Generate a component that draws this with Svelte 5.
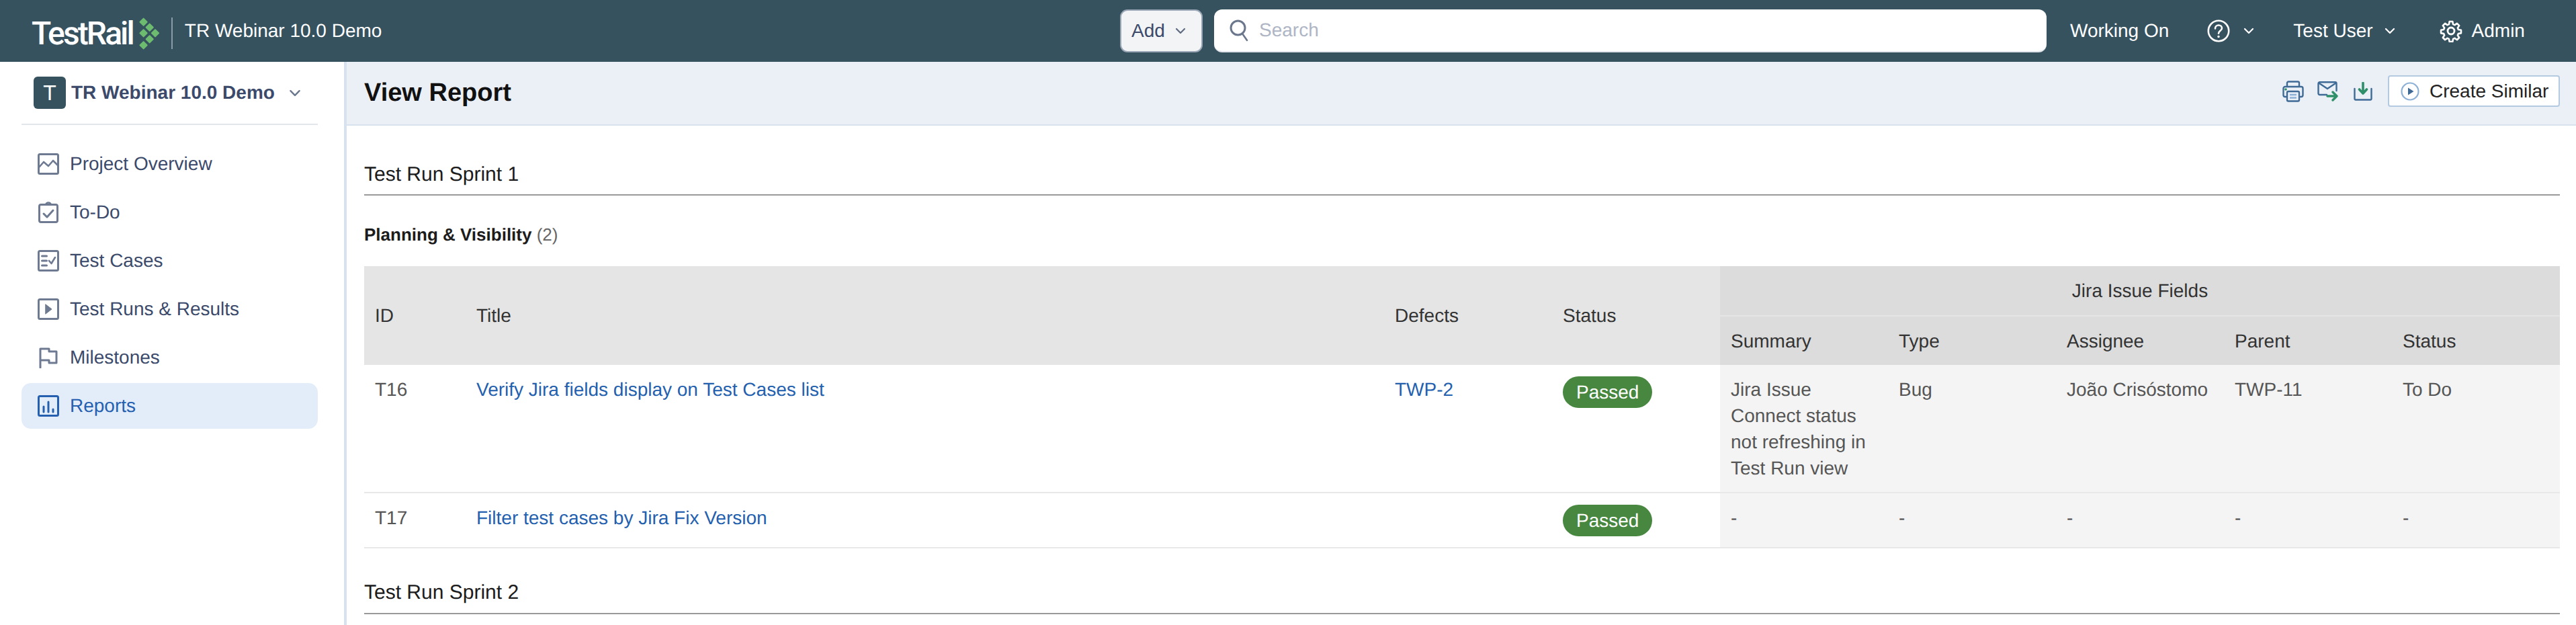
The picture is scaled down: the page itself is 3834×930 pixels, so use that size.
<script>
  const nav = [
    { key: 'overview', label: 'Project Overview' },
    { key: 'todo', label: 'To-Do' },
    { key: 'cases', label: 'Test Cases' },
    { key: 'runs', label: 'Test Runs & Results' },
    { key: 'milestones', label: 'Milestones' },
    { key: 'reports', label: 'Reports', active: true }
  ];

  const diamonds = [
    [4.6, 6.7], [13.7, 14.7], [4.6, 23.3], [22, 23.3], [13.7, 32.3], [4.6, 41.3]
  ];

  const rows = [
    {
      id: 'T16',
      title: 'Verify Jira fields display on Test Cases list',
      defect: 'TWP-2',
      fields: ['Jira Issue Connect status not refreshing in Test Run view', 'Bug', 'João Crisóstomo', 'TWP-11', 'To Do']
    },
    {
      id: 'T17',
      title: 'Filter test cases by Jira Fix Version',
      defect: '',
      fields: ['-', '-', '-', '-', '-']
    }
  ];

  const jira_cols = ['Summary', 'Type', 'Assignee', 'Parent', 'Status'];
</script>

{#snippet chevron(cls)}
  <svg class={cls} viewBox="0 0 16 10" fill="none" stroke="currentColor" stroke-width="2.2" stroke-linecap="round" stroke-linejoin="round">
    <polyline points="2,2 8,8 14,2" />
  </svg>
{/snippet}

<div class="shell">
  <header class="topbar">
    <div class="brand">
      <span class="wordmark">TestRail</span>
      <svg class="mark" viewBox="0 0 28 48" fill="#6cbb6f">
        {#each diamonds as [x, y]}
          <rect x={x - 4.6} y={y - 4.6} width="9.2" height="9.2" rx="1" transform="rotate(45 {x} {y})" />
        {/each}
      </svg>
      <span class="sep"></span>
      <span class="project">TR Webinar 10.0 Demo</span>
    </div>

    <button class="add">Add {@render chevron('chev-add')}</button>

    <div class="search">
      <svg class="search-icon" viewBox="0 0 28 34" fill="none" stroke="#6b778c" stroke-width="3" stroke-linecap="round">
        <circle cx="12.5" cy="13.5" r="10.5" />
        <line x1="19" y1="22" x2="26" y2="32" stroke-width="2.6" />
      </svg>
      <span>Search</span>
    </div>

    <div class="top-links">
      <span>Working On</span>
      <svg class="help" viewBox="0 0 34 34" fill="none" stroke="#fff" stroke-width="2.6">
        <circle cx="17" cy="17" r="15.2" />
        <path d="M12 13.5c0-3 2.2-5 5-5s5 2 5 4.6c0 3.6-5 3.8-5 7.6" stroke-linecap="round" />
        <circle cx="17" cy="25.5" r="1.7" fill="#fff" stroke="none" />
      </svg>
      {@render chevron('chev-help')}
      <span class="user">Test User</span>
      {@render chevron('chev-user')}
      <svg class="gear" viewBox="0 0 34 34" fill="none" stroke="#fff" stroke-width="2.8" stroke-linejoin="round">
        <path d="M14.5 2h5l.8 4.4 2.6 1.1 3.7-2.5 3.5 3.5-2.5 3.7 1.1 2.6 4.4.8v5l-4.4.8-1.1 2.6 2.5 3.7-3.5 3.5-3.7-2.5-2.6 1.1-.8 4.4h-5l-.8-4.4-2.6-1.1-3.7 2.5-3.5-3.5 2.5-3.7-1.1-2.6-4.4-.8v-5l4.4-.8 1.1-2.6-2.5-3.7 3.5-3.5 3.7 2.5 2.6-1.1z" transform="translate(1.2 1.2) scale(.93)" />
        <circle cx="17" cy="17" r="5" />
      </svg>
      <span class="admin">Admin</span>
    </div>
  </header>

  <div class="body">
    <aside class="sidebar">
      <div class="project-row">
        <span class="avatar">T</span>
        <strong>TR Webinar 10.0 Demo</strong>
        {@render chevron('chev-project')}
      </div>
      <nav>
        {#each nav as item (item.key)}
          <a href="#top" class="nav-item" class:active={item.active}>
            <svg class="nav-icon" viewBox="0 0 32 32" fill="none" stroke="currentColor" stroke-width="3" stroke-linejoin="round" stroke-linecap="round">
              {#if item.key === 'overview'}
                <rect x="1.5" y="1.5" width="29" height="29" rx="2" />
                <polyline points="2,21 9,13 16,19 23,11 30,18" stroke-width="2.6" />
              {:else if item.key === 'todo'}
                <rect x="2.5" y="4.5" width="27" height="26" rx="2.5" />
                <path d="M12 4.5a4 3 0 0 1 8 0" stroke-width="2.4" />
                <polyline points="9,18 14,23 23,13" />
              {:else if item.key === 'cases'}
                <rect x="1.5" y="1.5" width="29" height="29" rx="2" />
                <path d="M6.5 9h7M6.5 16h7M6.5 23h7" />
                <polyline points="17,16 20.5,20 26,11" stroke-width="2.6" />
              {:else if item.key === 'runs'}
                <rect x="1.5" y="1.5" width="29" height="29" rx="2" />
                <polygon points="12,9 21,16 12,23" fill="currentColor" stroke-width="1" />
              {:else if item.key === 'milestones'}
                <path d="M4 31V3h13v4h11v17H17v-4H4" />
              {:else}
                <rect x="1.5" y="1.5" width="29" height="29" rx="2" />
                <path d="M9 17v8M16 10v15M23 21v4" />
              {/if}
            </svg>
            <span>{item.label}</span>
          </a>
        {/each}
      </nav>
    </aside>

    <main class="main">
      <div class="title-bar">
        <h1>View Report</h1>
        <div class="actions">
          <svg class="print" viewBox="0 0 32 32" fill="none" stroke="#3f6a96" stroke-width="2.4" stroke-linejoin="round">
            <path d="M7 9V3.5a2 2 0 0 1 2-2h14a2 2 0 0 1 2 2V9" />
            <path d="M7 24H4a2.5 2.5 0 0 1-2.5-2.5V11.500a2.500 2.500 0 0 1 2.500-2.500h24a2.500 2.500 0 0 1 2.500 2.500v10a2.500 2.500 0 0 1-2.500 2.500h-3" />
            <rect x="7" y="16" width="18" height="14.500" rx="2" fill="#ebf0f7" />
            <path d="M11 21h10M11 25.500h10" stroke="#8db1d6" />
            <circle cx="5" cy="13" r="1.800" fill="#2f8f68" stroke="none" />
          </svg>
          <svg class="mail" viewBox="0 0 32 30" fill="none" stroke="#3f6a96" stroke-width="2.4" stroke-linecap="round" stroke-linejoin="round">
            <path d="M14 20H3.500a2 2 0 0 1-2-2V3.200a2 2 0 0 1 2-2h23a2 2 0 0 1 2 2V14" />
            <polyline points="3,3 15,11 27,3" />
            <path d="M15 22h14M23 16l6 6-6 6" stroke="#2f8f68" stroke-width="3.400" />
          </svg>
          <svg class="download" viewBox="0 0 28 28" fill="none" stroke="#3f6a96" stroke-width="2.400" stroke-linejoin="round" stroke-linecap="round">
            <path d="M1.500 10v15a1.500 1.500 0 0 0 1.500 1.500h22a1.500 1.500 0 0 0 1.500-1.500V10" />
            <path d="M14 1.500V15M8.500 11L14 17l5.500-6" stroke="#2f8f68" stroke-width="3.600" />
          </svg>
          <button class="similar">
            <svg viewBox="0 0 28 28">
              <circle cx="14" cy="14" r="12.500" fill="none" stroke="#8db1d6" stroke-width="2.200" />
              <polygon points="11,8.500 19.500,14 11,19.500" fill="#3f6a96" />
            </svg>
            Create Similar
          </button>
        </div>
      </div>

      <div class="content">
        <h2>Test Run Sprint 1</h2>
        <h3>Planning &amp; Visibility <small>(2)</small></h3>

        <table>
          <colgroup>
            <col class="c-id" />
            <col class="c-title" />
            <col class="c-std" />
            <col class="c-std" />
            {#each jira_cols as col (col)}
              <col class="c-std" />
            {/each}
          </colgroup>
          <thead>
            <tr class="group-row">
              <th rowspan="2">ID</th>
              <th rowspan="2">Title</th>
              <th rowspan="2">Defects</th>
              <th rowspan="2">Status</th>
              <th colspan="5" class="jira group">Jira Issue Fields</th>
            </tr>
            <tr class="cols-row">
              {#each jira_cols as col (col)}
                <th class="jira">{col}</th>
              {/each}
            </tr>
          </thead>
          <tbody>
            {#each rows as row (row.id)}
              <tr>
                <td>{row.id}</td>
                <td><a href="#top">{row.title}</a></td>
                <td><a href="#top">{row.defect}</a></td>
                <td><span class="pill">Passed</span></td>
                {#each row.fields as value}
                  <td class="jira-cell">{value}</td>
                {/each}
              </tr>
            {/each}
          </tbody>
        </table>

        <h2 class="next">Test Run Sprint 2</h2>
      </div>
    </main>
  </div>
</div>

<style>
  :global(body) {
    margin: 0;
    background: #fff;
    font-family: "Liberation Sans", Arial, sans-serif;
    text-rendering: geometricPrecision;
  }

  .shell {
    height: 930px;
    overflow: hidden;
    display: flex;
    flex-direction: column;
    font-size: 28px;
  }

  /* top bar */
  .topbar {
    flex: none;
    height: 92px;
    background: #36525f;
    color: #fff;
    display: flex;
    align-items: center;
  }

  .brand {
    width: 1667px;
    box-sizing: border-box;
    padding-left: 47px;
    display: flex;
    align-items: center;
  }

  .wordmark {
    font-family: Roboto, sans-serif;
    font-weight: 500;
    font-size: 48px;
    letter-spacing: -2.9px;
    line-height: 48px;
    margin-top: 8px;
  }

  .mark {
    width: 28px;
    height: 48px;
    margin: 8px 0 0 11px;
    overflow: visible;
  }

  .sep {
    width: 2px;
    height: 47px;
    background: #8b9ca6;
    margin: 7px 18px 0 18px;
  }

  .project {
    font-size: 28px;
  }

  .add {
    width: 123px;
    height: 64px;
    box-sizing: border-box;
    border: 2px solid #9aa6b5;
    border-radius: 11px;
    background: #f3f4f6;
    color: #3b4a6b;
    font: inherit;
    padding: 0 0 0 15px;
    display: flex;
    align-items: center;
    gap: 15px;
  }

  .chev-add {
    width: 16px;
    height: 10px;
    color: #5f6b80;
  }

  .search {
    width: 1239px;
    height: 64px;
    margin-left: 17px;
    box-sizing: border-box;
    background: #fff;
    border-radius: 12px;
    border-bottom: 2px solid #e1e4ea;
    padding-left: 23px;
    display: flex;
    align-items: center;
    gap: 16px;
    color: #aeb5c4;
  }

  .search-icon {
    width: 28px;
    height: 34px;
  }

  .top-links {
    margin-left: 35px;
    display: flex;
    align-items: center;
  }

  .help {
    width: 34px;
    height: 34px;
    margin-left: 57px;
  }

  .chev-help,
  .chev-user {
    width: 16px;
    height: 10px;
    margin-left: 20px;
  }

  .user {
    margin-left: 58px;
  }

  .chev-user {
    margin-left: 17px;
  }

  .gear {
    width: 34px;
    height: 34px;
    margin-left: 66px;
  }

  .admin {
    margin-left: 14px;
  }

  /* sidebar */
  .body {
    flex: 1;
    display: flex;
    min-height: 0;
  }

  .sidebar {
    flex: none;
    width: 516px;
    box-sizing: border-box;
    border-right: 4px solid #d8e1ee;
    padding: 0 39px 0 32px;
  }

  .project-row {
    height: 92px;
    border-bottom: 2px solid #e2e5ea;
    display: flex;
    align-items: center;
    padding-left: 18px;
    color: #3b4a6b;
  }

  .avatar {
    width: 48px;
    height: 48px;
    border-radius: 6px;
    background: #36525f;
    color: #fff;
    font-size: 32px;
    display: flex;
    align-items: center;
    justify-content: center;
    margin-right: 8px;
  }

  .project-row strong {
    font-size: 28px;
  }

  .chev-project {
    width: 18px;
    height: 11px;
    margin-left: 21px;
    color: #6b778c;
  }

  nav {
    margin-top: 24px;
    display: flex;
    flex-direction: column;
    gap: 4px;
  }

  .nav-item {
    height: 68px;
    border-radius: 14px;
    padding-left: 24px;
    display: flex;
    align-items: center;
    gap: 16px;
    color: #6e7a91;
    text-decoration: none;
  }

  .nav-item span {
    color: #3b4a6b;
  }

  .nav-item.active {
    background: #e3edfa;
    color: #2560b0;
  }

  .nav-item.active span {
    color: #2560b0;
  }

  .nav-icon {
    width: 32px;
    height: 32px;
    flex: none;
  }

  /* main */
  .main {
    flex: 1;
    min-width: 0;
  }

  .title-bar {
    height: 95px;
    box-sizing: border-box;
    background: #ebf0f7;
    border-bottom: 2px solid #d8e1ee;
    padding: 0 24px 0 26px;
    display: flex;
    align-items: center;
    justify-content: space-between;
  }

  h1 {
    margin: 0;
    font-size: 38px;
    color: #111;
  }

  .actions {
    display: flex;
    align-items: center;
    margin-bottom: 6px;
  }

  .print {
    width: 32px;
    height: 32px;
  }

  .mail {
    width: 32px;
    height: 30px;
    margin-left: 20px;
  }

  .download {
    width: 28px;
    height: 28px;
    margin-left: 22px;
  }

  .similar {
    width: 256px;
    height: 47px;
    box-sizing: border-box;
    margin-left: 23px;
    border: 2px solid #b3cae0;
    border-radius: 4px;
    background: #fff;
    color: #222;
    font: inherit;
    padding: 0 0 0 17px;
    display: flex;
    align-items: center;
    gap: 15px;
  }

  .similar svg {
    width: 28px;
    height: 28px;
  }

  .content {
    padding: 0 24px 0 26px;
  }

  h2 {
    margin: 55px 0 0;
    padding-bottom: 11px;
    border-bottom: 2px solid #999;
    font-size: 30px;
    font-weight: 400;
    line-height: 36px;
    color: #1c1c1c;
  }

  h2.next {
    margin-top: 48px;
    padding-bottom: 12px;
  }

  h3 {
    margin: 40px 0 29px;
    font-size: 26px;
    line-height: 36px;
    color: #1c1c1c;
  }

  h3 small {
    font-size: 26px;
    font-weight: 400;
    color: #666;
  }

  table {
    width: 3268px;
    table-layout: fixed;
    border-collapse: collapse;
  }

  .c-id {
    width: 151px;
  }

  .c-title {
    width: 1367px;
  }

  .c-std {
    width: 250px;
  }

  th {
    background: #e5e5e5;
    padding: 0 16px;
    font-weight: 400;
    text-align: left;
    color: #333;
    line-height: 39px;
  }

  th.jira {
    background: #dcdcdc;
  }

  th.group {
    text-align: center;
    border-bottom: 2px solid #e5e5e5;
  }

  .group-row {
    height: 74px;
  }

  .cols-row {
    height: 73px;
  }

  td {
    padding: 17px 16px 16px;
    vertical-align: top;
    line-height: 39px;
    color: #555;
    border-bottom: 2px solid #e8e8e8;
  }

  td a {
    color: #2360ae;
    text-decoration: none;
  }

  .jira-cell {
    background: #f4f4f4;
  }

  .pill {
    display: inline-flex;
    align-items: center;
    height: 47px;
    border-radius: 24px;
    padding: 0 20px;
    background: #47873f;
    color: #fff;
    vertical-align: top;
  }
</style>
